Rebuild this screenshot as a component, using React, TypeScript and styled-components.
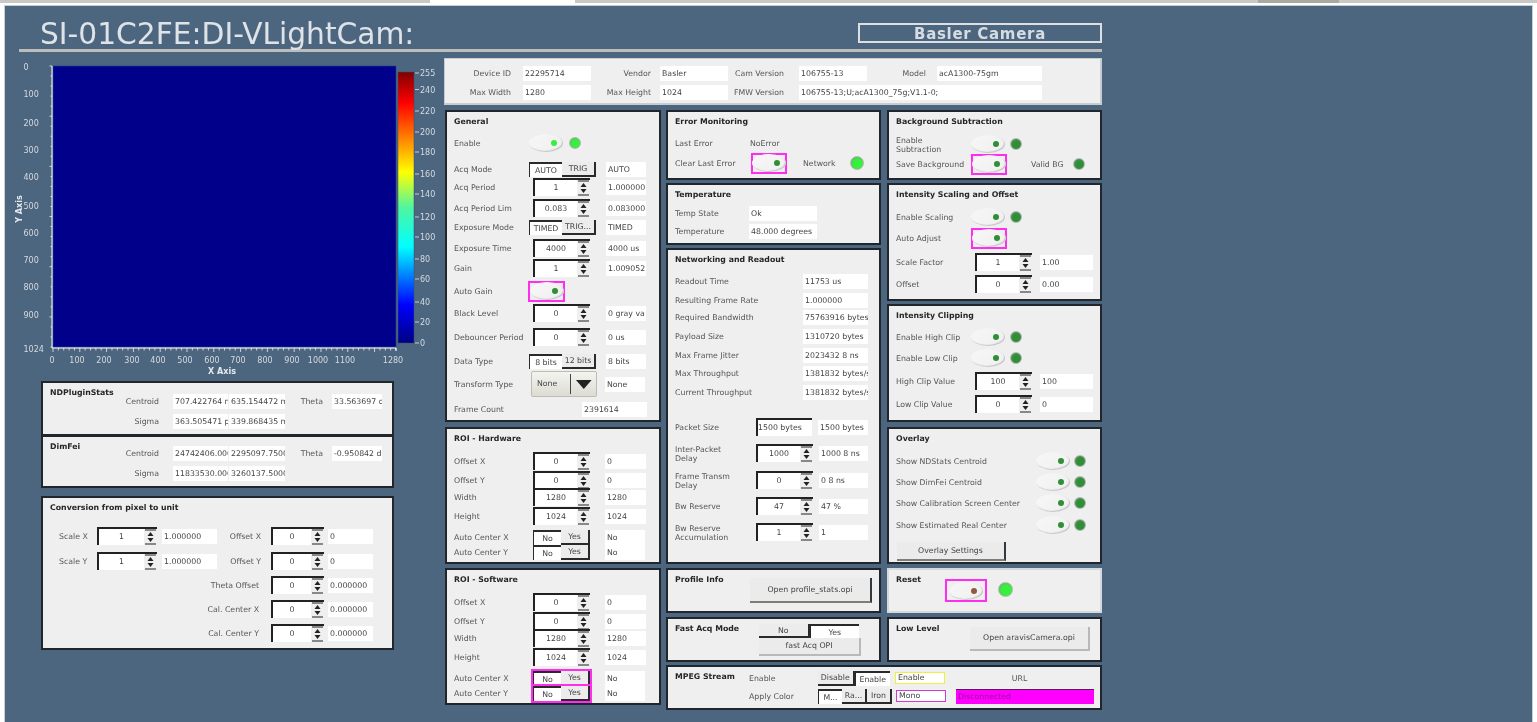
import React from 'react';
import styled, { createGlobalStyle } from 'styled-components';

const GlobalStyle = createGlobalStyle`
  html, body {
    margin: 0;
    padding: 0;
    height: 722px;
    overflow: hidden;
    background: #fff;
    font-family: 'DejaVu Sans', sans-serif;
  }
  * { box-sizing: border-box; }
`;

const Strip = styled.div`
  display: flex;
  height: 5px;
  padding-bottom: 2px;
`;

const StripPart = styled.div<{ $w?: number; $color: string }>`
  flex: ${({ $w }) => ($w ? `0 0 ${$w}px` : '1')};
  background: ${({ $color }) => $color};
`;

const Screen = styled.div`
  height: 717px;
  margin: 0 4px;
  padding-left: 14px;
  background: #4c6680;
  border: 1px solid #c9ced3;
  border-bottom: 0;
  filter: blur(0.5px);
  overflow: hidden;
`;

const Header = styled.div`
  width: 1083px;
  height: 46px;
  display: flex;
  justify-content: space-between;
  align-items: flex-start;
  padding-left: 21px;
  border-bottom: 3px solid #bcbcbc;
`;

const BigTitle = styled.div`
  margin-top: 11px;
  font-size: 29.7px;
  line-height: 34px;
  color: #dfe3e7;
  white-space: nowrap;
`;

const CameraBox = styled.div`
  width: 244px;
  height: 20px;
  margin-top: 17px;
  border: 2px solid #dde0e3;
  color: #d6dce1;
  font-size: 15px;
  font-weight: 700;
  line-height: 19px;
  letter-spacing: 0.7px;
  text-align: center;
`;

const Body = styled.div`
  display: flex;
  margin-top: 4px;
`;

const LeftColumn = styled.div`
  width: 425px;
  flex: none;
`;

const ChartSvg = styled.svg`
  display: block;
  width: 425px;
  height: 325px;
  overflow: visible;
  font-family: 'DejaVu Sans', sans-serif;
  font-size: 8px;
`;

const CardStack = styled.div`
  margin-left: 22px;
  width: 353px;
`;

const RightArea = styled.div`
  width: 658px;
  margin-top: 2px;
`;

const InfoGrid = styled.div`
  height: 47px;
  padding: 7px 0 0 2px;
  display: grid;
  grid-template-columns: 76px 68px 69px 68px 71px 68px 70px 105px;
  grid-auto-rows: 19px;
  background: #efefef;
  border: 1px solid #c6ccd1;
  border-width: 1px 2px 2px 1px;
`;

const InfoLabel = styled.div<{ $pr: number }>`
  font-size: 7.8px;
  line-height: 15px;
  text-align: right;
  color: #555;
  padding-right: ${({ $pr }) => $pr}px;
  white-space: nowrap;
`;

const Columns = styled.div`
  display: flex;
  margin-top: 5px;
`;

const Column = styled.div<{ $ml: number; $w: number }>`
  margin-left: ${({ $ml }) => $ml}px;
  width: ${({ $w }) => $w}px;
  flex: none;
`;

const SubColumns = styled.div`
  display: flex;
`;

const Panel = styled.div<{ $h: number; $mt?: number; $light?: boolean }>`
  height: ${({ $h }) => $h}px;
  margin-top: ${({ $mt }) => $mt ?? 0}px;
  padding: 2px 7px;
  background: #efefef;
  border: 2px solid ${({ $light }) => ($light ? '#d5d9dc' : '#20262c')};
  color: #555;
`;

const Title = styled.div<{ $w?: number }>`
  height: 14px;
  flex: none;
  padding-top: 1px;
  width: ${({ $w }) => ($w ? `${$w}px` : 'auto')};
  font-size: 7.8px;
  font-weight: 700;
  line-height: 14px;
  color: #262626;
  white-space: nowrap;
`;

const Row = styled.div<{ $dy: number }>`
  display: flex;
  align-items: center;
  height: 14px;
  margin-top: ${({ $dy }) => $dy - 14}px;
`;

const Inline = styled.div`
  display: flex;
  align-items: flex-start;
`;

const Stack = styled.div<{ $mt?: number; $ml?: number }>`
  flex: none;
  margin-top: ${({ $mt }) => $mt ?? 0}px;
  margin-left: ${({ $ml }) => $ml ?? 0}px;
`;

const Label = styled.div<{ $w: number; $right?: boolean; $center?: boolean; $ml?: number }>`
  flex: none;
  width: ${({ $w }) => $w}px;
  margin-left: ${({ $ml }) => $ml ?? 0}px;
  padding-top: 2px;
  font-size: 7.8px;
  line-height: 9.5px;
  text-align: ${({ $right, $center }) => ($right ? 'right' : $center ? 'center' : 'left')};
  color: #555;
`;

const Readout = styled.div<{ $w?: number; $h?: number; $ml?: number; $border?: string; $span?: number }>`
  flex: none;
  width: ${({ $w }) => ($w ? `${$w}px` : 'auto')};
  height: ${({ $h }) => $h ?? 15}px;
  margin-left: ${({ $ml }) => $ml ?? 0}px;
  padding: 0 1px 0 2px;
  grid-column: ${({ $span }) => ($span ? `span ${$span}` : 'auto')};
  background: #fff;
  border: ${({ $border }) => ($border ? `1px solid ${$border}` : '0')};
  font-size: 7.8px;
  line-height: ${({ $h, $border }) => ($h ?? 15) - ($border ? 2 : 0)}px;
  color: #444;
  white-space: nowrap;
  overflow: hidden;
`;

const AlarmText = styled.div`
  flex: none;
  width: 138px;
  height: 15px;
  margin-left: 10px;
  padding-left: 2px;
  background: #ff00ff;
  border-top: 1px solid #5a1a5a;
  color: #96109a;
  font-size: 7.8px;
  line-height: 13px;
`;

const SpinBox = styled.div<{ $w: number; $ml?: number; $left?: boolean }>`
  flex: none;
  display: flex;
  width: ${({ $w }) => $w}px;
  height: 18px;
  margin-left: ${({ $ml }) => $ml ?? 0}px;
  background: #fff;
  border-top: 2px solid #222;
  border-left: 2px solid #222;
  font-size: 7.8px;
  line-height: 16px;
  color: #444;
  text-align: ${({ $left }) => ($left ? 'left' : 'center')};
  white-space: nowrap;
  overflow: hidden;
`;

const SpinValue = styled.div`
  flex: 1;
`;

const ArrowSvg = styled.svg`
  flex: none;
  display: block;
  width: 13px;
  height: 16px;
  background: #efefef;
`;

const ChoiceGroup = styled.div<{ $w: number; $h?: number; $ml?: number; $rule?: boolean }>`
  flex: none;
  display: flex;
  width: ${({ $w }) => $w}px;
  height: ${({ $h }) => $h ?? 15}px;
  margin-left: ${({ $ml }) => $ml ?? 0}px;
  outline: ${({ $rule }) => ($rule ? '2px solid #ff2df0' : 'none')};
`;

const ChoiceItem = styled.div<{ $on: boolean }>`
  flex: 1;
  min-width: 0;
  font-size: 7.8px;
  line-height: 13px;
  text-align: center;
  color: #444;
  white-space: nowrap;
  overflow: hidden;
  background: ${({ $on }) => ($on ? '#fff' : '#ececec')};
  border-style: solid;
  border-color: #2a2a2a;
  border-width: ${({ $on }) => ($on ? '2px 0 0 1px' : '0 2px 2px 0')};
`;

const RuleBox = styled.div<{ $w: number; $h: number; $ml?: number; $mt?: number }>`
  flex: none;
  display: flex;
  align-items: center;
  justify-content: center;
  width: ${({ $w }) => $w}px;
  height: ${({ $h }) => $h}px;
  margin-left: ${({ $ml }) => $ml ?? 0}px;
  margin-top: ${({ $mt }) => $mt ?? 0}px;
  border: 2px solid #ff2df0;
`;

const Switch = styled.div<{ $ml?: number }>`
  flex: none;
  display: flex;
  align-items: center;
  justify-content: flex-end;
  width: 34px;
  height: 18px;
  padding-right: 6px;
  margin-left: ${({ $ml }) => $ml ?? 0}px;
  border-radius: 50%;
  background: linear-gradient(135deg, #f7f7f7, #efefef);
  box-shadow: inset -1px -1px 1px #c4c4c4;
`;

const SwitchDot = styled.div<{ $color: string }>`
  width: 6px;
  height: 6px;
  border-radius: 50%;
  background: ${({ $color }) => $color};
`;

const Led = styled.div<{ $size?: number; $color: string; $ml?: number; $mt?: number }>`
  flex: none;
  width: ${({ $size }) => $size ?? 12}px;
  height: ${({ $size }) => $size ?? 12}px;
  margin-left: ${({ $ml }) => $ml ?? 0}px;
  margin-top: ${({ $mt }) => $mt ?? 0}px;
  border-radius: 50%;
  border: 1px solid #b4b8b4;
  background: radial-gradient(circle at 58% 58%, ${({ $color }) => $color} 45%, #84908a 100%);
`;

const ActionButton = styled.div<{ $w: number; $h: number; $ml?: number; $dark?: boolean }>`
  flex: none;
  width: ${({ $w }) => $w}px;
  height: ${({ $h }) => $h}px;
  margin-left: ${({ $ml }) => $ml ?? 0}px;
  background: #ebebeb;
  border-style: solid;
  border-color: ${({ $dark }) => ($dark ? '#33393f' : '#b9b9b9')};
  border-width: 0 2px 2px 0;
  border-bottom-color: ${({ $dark }) => ($dark ? '#7d7d75' : '#b9b9b9')};
  font-size: 7.8px;
  line-height: ${({ $h }) => $h - 2}px;
  text-align: center;
  color: #444;
  white-space: nowrap;
`;

const Combo = styled.div`
  flex: none;
  display: flex;
  align-items: center;
  width: 66px;
  height: 26px;
  margin-left: 2px;
  border: 1px solid #bdbdb2;
  border-radius: 2px;
  background: linear-gradient(#f4f4ef, #dcdcd4);
  font-size: 7.8px;
  color: #444;
`;

const ComboText = styled.div`
  width: 40px;
  height: 20px;
  line-height: 20px;
  padding-left: 5px;
  border-right: 1px solid #444;
`;

const GREEN = '#2e8f35';
const BRIGHT = '#35f03c';

const Arrows = () => (
  <ArrowSvg viewBox="0 0 13 16">
    <path d="M1 1 H12 M1 15 H12" stroke="#222" strokeWidth="1.2" />
    <path d="M6.5 3 L9.5 7 H3.5 Z M6.5 13 L9.5 9 H3.5 Z" fill="#222" />
  </ArrowSvg>
);

const Spin: React.FC<{ value: string; w?: number; ml?: number }> = ({ value, w = 57, ml }) => (
  <SpinBox $w={w} $ml={ml}>
    <SpinValue>{value}</SpinValue>
    <Arrows />
  </SpinBox>
);

const Choice: React.FC<{ items: string[]; on: number; w?: number; h?: number; ml?: number; rule?: boolean }> = ({
  items,
  on,
  w = 67,
  h,
  ml,
  rule
}) => (
  <ChoiceGroup $w={w} $h={h} $ml={ml} $rule={rule}>
    {items.map((item, i) => (
      <ChoiceItem key={item} $on={i === on}>
        {item}
      </ChoiceItem>
    ))}
  </ChoiceGroup>
);

const Toggle: React.FC<{ color?: string; ml?: number }> = ({ color = GREEN, ml }) => (
  <Switch $ml={ml}>
    <SwitchDot $color={color} />
  </Switch>
);

const RuledToggle: React.FC<{ ml?: number; w?: number; h?: number; color?: string; mt?: number }> = ({
  ml,
  w = 36,
  h = 21,
  color,
  mt
}) => (
  <RuleBox $w={w} $h={h} $ml={ml} $mt={mt}>
    <Toggle color={color} />
  </RuleBox>
);

const SpinRow: React.FC<{
  dy: number;
  label: React.ReactNode;
  value: string;
  readout: string;
  lw?: number;
  ml?: number;
  gap?: number;
  rw?: number;
}> = ({ dy, label, value, readout, lw = 75, ml = 4, gap = 16, rw = 40 }) => (
  <Row $dy={dy}>
    <Label $w={lw}>{label}</Label>
    <Spin value={value} ml={ml} />
    <Readout $w={rw} $ml={gap}>
      {readout}
    </Readout>
  </Row>
);

const ChoiceRow: React.FC<{ dy: number; label: string; items: string[]; readout: string; rule?: boolean; w?: number; ml?: number; gap?: number }> = ({
  dy,
  label,
  items,
  readout,
  rule,
  w,
  ml,
  gap = 10
}) => (
  <Row $dy={dy}>
    <Label $w={75}>{label}</Label>
    <Choice items={items} on={0} w={w} ml={ml} rule={rule} />
    <Readout $w={40} $ml={gap}>
      {readout}
    </Readout>
  </Row>
);

const ValueRow: React.FC<{ dy: number; label: string; value: string }> = ({ dy, label, value }) => (
  <Row $dy={dy}>
    <Label $w={128}>{label}</Label>
    <Readout $w={65}>{value}</Readout>
  </Row>
);

const RoiPanel: React.FC<{ title: string; mt: number; rows: number[]; rule?: boolean }> = ({ title, mt, rows, rule }) => (
  <Panel $h={137} $mt={mt}>
    <Title>{title}</Title>
    <SpinRow dy={rows[0]} label="Offset X" value="0" readout="0" gap={15} rw={41} />
    <SpinRow dy={rows[1]} label="Offset Y" value="0" readout="0" gap={15} rw={41} />
    <SpinRow dy={rows[2]} label="Width" value="1280" readout="1280" gap={15} rw={41} />
    <SpinRow dy={rows[3]} label="Height" value="1024" readout="1024" gap={15} rw={41} />
    <ChoiceRow dy={rows[4]} label="Auto Center X" items={['No', 'Yes']} readout="No" w={57} ml={4} gap={15} rule={rule} />
    <ChoiceRow dy={15} label="Auto Center Y" items={['No', 'Yes']} readout="No" w={57} ml={4} gap={15} rule={rule} />
  </Panel>
);

const StatRow: React.FC<{ dy: number; name: string; a: string; b: string; theta?: string }> = ({ dy, name, a, b, theta }) => (
  <Row $dy={dy}>
    <Label $w={109} $right>
      {name}
    </Label>
    <Readout $w={55} $ml={14}>
      {a}
    </Readout>
    <Readout $w={56} $ml={1}>
      {b}
    </Readout>
    {theta && (
      <>
        <Label $w={38} $right>
          Theta
        </Label>
        <Readout $w={50} $ml={9}>
          {theta}
        </Readout>
      </>
    )}
  </Row>
);

const ConvRow: React.FC<{ dy: number; leftLabel?: string; leftValue?: string; label: string; value: string; readout?: string }> = ({
  dy,
  leftLabel,
  leftValue,
  label,
  value,
  readout
}) => (
  <Row $dy={dy}>
    {leftLabel ? (
      <>
        <Label $w={38} $ml={9}>
          {leftLabel}
        </Label>
        <Spin value="1" w={60} />
        <Readout $w={55} $ml={5}>
          {leftValue}
        </Readout>
        <Label $w={44} $right>
          {label}
        </Label>
      </>
    ) : (
      <Label $w={209} $right>
        {label}
      </Label>
    )}
    <Spin value={value} w={53} ml={leftLabel ? 10 : 12} />
    <Readout $w={45} $ml={4}>
      {readout}
    </Readout>
  </Row>
);

const yTicks: [string, number][] = [
  ['0', 67],
  ['100', 94],
  ['200', 123],
  ['300', 150],
  ['400', 177],
  ['500', 206],
  ['600', 233],
  ['700', 260],
  ['800', 287],
  ['900', 315],
  ['1024', 349]
];

const xTicks: [string, number][] = [
  ['0', 52],
  ['100', 77],
  ['200', 104],
  ['300', 132],
  ['400', 158],
  ['500', 185],
  ['600', 212],
  ['700', 238],
  ['800', 265],
  ['900', 292],
  ['1000', 318],
  ['1100', 345],
  ['1280', 393]
];

const barTicks: [string, number][] = [
  ['255', 73],
  ['240', 89.5],
  ['220', 111],
  ['200', 132],
  ['180', 152],
  ['160', 174],
  ['140', 194],
  ['120', 217],
  ['100', 237],
  ['80', 259],
  ['60', 279],
  ['40', 302],
  ['20', 322],
  ['0', 343]
];

const minorY = Array.from({ length: 29 }, (_, i) => 66 + (i * 281) / 28);
const minorX = Array.from({ length: 65 }, (_, i) => 53 + (i * 343) / 64);

const Chart = () => (
  <ChartSvg viewBox="19 56 425 325">
    <defs>
      <linearGradient id="jet" x1="0" y1="0" x2="0" y2="1">
        <stop offset="0" stopColor="#800000" />
        <stop offset="0.114" stopColor="#ff0000" />
        <stop offset="0.37" stopColor="#ffff00" />
        <stop offset="0.5" stopColor="#50f5a0" />
        <stop offset="0.645" stopColor="#00ffff" />
        <stop offset="0.86" stopColor="#0000ff" />
        <stop offset="1" stopColor="#000080" />
      </linearGradient>
    </defs>
    <rect x="53" y="66" width="343" height="281" fill="#00008b" stroke="#2a3f8a" strokeWidth="0.6" />
    <rect x="398" y="72" width="16" height="271" fill="url(#jet)" stroke="#33507a" strokeWidth="0.5" />
    <path d="M52 66 V348 H396 V351" fill="none" stroke="#fff" strokeWidth="1" />
    {minorY.map((y, i) => (
      <path key={y} d={`M${i % 5 === 0 ? 49.5 : 50.5} ${y} H52`} stroke="#fff" strokeWidth="0.7" />
    ))}
    {minorX.map((x, i) => (
      <path key={x} d={`M${x} 348 V${i % 5 === 0 ? 352 : 350.5}`} stroke="#fff" strokeWidth="0.7" />
    ))}
    {yTicks.map(([label, y]) => (
      <text key={label} x="23.5" y={y + 3} fill="#d5dade">
        {label}
      </text>
    ))}
    {xTicks.map(([label, x]) => (
      <text key={label} x={x} y="363" fill="#d5dade" textAnchor="middle">
        {label}
      </text>
    ))}
    {barTicks.map(([label, y]) => (
      <React.Fragment key={label}>
        <path d={`M415 ${y} H419`} stroke="#e6e6e6" strokeWidth="0.8" />
        <text x="420" y={y + 3} fill="#d5dade">
          {label}
        </text>
      </React.Fragment>
    ))}
    <text x="222" y="374" fill="#e6e9ec" fontWeight="700" textAnchor="middle">
      X Axis
    </text>
    <text transform="translate(22 209) rotate(-90)" fill="#e6e9ec" fontWeight="700" textAnchor="middle">
      Y Axis
    </text>
  </ChartSvg>
);

const overlayRows: [string, number][] = [
  ['Show NDStats Centroid', 23],
  ['Show DimFei Centroid', 21],
  ['Show Calibration Screen Center', 21],
  ['Show Estimated Real Center', 22]
];

export default function App() {
  return (
    <>
      <GlobalStyle />
      <Strip>
        <StripPart $w={430} $color="#c8c8c8" />
        <StripPart $w={145} $color="#ffffff" />
        <StripPart $w={683} $color="#c8c8c8" />
        <StripPart $w={81} $color="#a9a9a2" />
        <StripPart $color="#c8c8c8" />
      </Strip>
      <Screen>
        <Header>
          <BigTitle>SI-01C2FE:DI-VLightCam:</BigTitle>
          <CameraBox>Basler Camera</CameraBox>
        </Header>
        <Body>
          <LeftColumn>
            <Chart />
            <CardStack>
              <Panel $h={55}>
                <Title>NDPluginStats</Title>
                <StatRow dy={9} name="Centroid" a="707.422764 m" b="635.154472 m" theta="33.563697 deg" />
                <StatRow dy={20} name="Sigma" a="363.505471 px" b="339.868435 m" />
              </Panel>
              <Panel $h={53} $mt={-1}>
                <Title>DimFei</Title>
                <StatRow dy={7} name="Centroid" a="24742406.000" b="2295097.7500" theta="-0.950842 deg" />
                <StatRow dy={20} name="Sigma" a="11833530.000" b="3260137.5000" />
              </Panel>
              <Panel $h={154} $mt={8}>
                <Title>Conversion from pixel to unit</Title>
                <ConvRow dy={29} leftLabel="Scale X" leftValue="1.000000" label="Offset X" value="0" readout="0" />
                <ConvRow dy={25} leftLabel="Scale Y" leftValue="1.000000" label="Offset Y" value="0" readout="0" />
                <ConvRow dy={24} label="Theta Offset" value="0" readout="0.000000" />
                <ConvRow dy={24} label="Cal. Center X" value="0" readout="0.000000" />
                <ConvRow dy={24} label="Cal. Center Y" value="0" readout="0.000000" />
              </Panel>
            </CardStack>
          </LeftColumn>
          <RightArea>
            <InfoGrid>
              <InfoLabel $pr={12}>Device ID</InfoLabel>
              <Readout>22295714</Readout>
              <InfoLabel $pr={9}>Vendor</InfoLabel>
              <Readout>Basler</Readout>
              <InfoLabel $pr={15}>Cam Version</InfoLabel>
              <Readout>106755-13</Readout>
              <InfoLabel $pr={11}>Model</InfoLabel>
              <Readout>acA1300-75gm</Readout>
              <InfoLabel $pr={12}>Max Width</InfoLabel>
              <Readout>1280</Readout>
              <InfoLabel $pr={9}>Max Height</InfoLabel>
              <Readout>1024</Readout>
              <InfoLabel $pr={15}>FMW Version</InfoLabel>
              <Readout $span={3}>106755-13;U;acA1300_75g;V1.1-0;</Readout>
            </InfoGrid>
            <Columns>
              <Column $ml={1} $w={216}>
                <Panel $h={312}>
                  <Title>General</Title>
                  <Row $dy={22}>
                    <Label $w={75}>Enable</Label>
                    <Toggle color={BRIGHT} />
                    <Led $color={BRIGHT} $ml={6} />
                  </Row>
                  <ChoiceRow dy={26} label="Acq Mode" items={['AUTO', 'TRIG']} readout="AUTO" />
                  <SpinRow dy={18} label="Acq Period" value="1" readout="1.000000" />
                  <SpinRow dy={21} label="Acq Period Lim" value="0.083" readout="0.083000" />
                  <ChoiceRow dy={19} label="Exposure Mode" items={['TIMED', 'TRIG...']} readout="TIMED" />
                  <SpinRow dy={21} label="Exposure Time" value="4000" readout="4000 us" />
                  <SpinRow dy={20} label="Gain" value="1" readout="1.009052" />
                  <Row $dy={23}>
                    <Label $w={74}>Auto Gain</Label>
                    <RuledToggle w={37} />
                  </Row>
                  <SpinRow dy={22} label="Black Level" value="0" readout="0 gray va" />
                  <SpinRow dy={24} label="Debouncer Period" value="0" readout="0 us" />
                  <ChoiceRow dy={24} label="Data Type" items={['8 bits', '12 bits']} readout="8 bits" />
                  <Row $dy={23}>
                    <Label $w={75}>Transform Type</Label>
                    <Combo>
                      <ComboText>None</ComboText>
                      <svg width="25" height="9" viewBox="-5 0 25 9">
                        <path d="M0 0 H16 L8 9 Z" fill="#222" />
                      </svg>
                    </Combo>
                    <Readout $w={40} $ml={8}>
                      None
                    </Readout>
                  </Row>
                  <Row $dy={25}>
                    <Label $w={128}>Frame Count</Label>
                    <Readout $w={65}>2391614</Readout>
                  </Row>
                </Panel>
                <RoiPanel title="ROI - Hardware" mt={5} rows={[23, 19, 17, 19, 21]} />
                <RoiPanel title="ROI - Software" mt={4} rows={[23, 19, 17, 19, 21]} rule />
              </Column>
              <Column $ml={5} $w={436}>
                <SubColumns>
                  <Column $ml={0} $w={215}>
                    <Panel $h={70}>
                      <Title>Error Monitoring</Title>
                      <Row $dy={22}>
                        <Label $w={75}>Last Error</Label>
                        <Label $w={60}>NoError</Label>
                      </Row>
                      <Row $dy={20}>
                        <Label $w={75}>Clear Last Error</Label>
                        <RuledToggle ml={1} />
                        <Label $w={47} $ml={16}>
                          Network
                        </Label>
                        <Led $size={14} $color={BRIGHT} />
                      </Row>
                    </Panel>
                    <Panel $h={62} $mt={3}>
                      <Title>Temperature</Title>
                      <Row $dy={19}>
                        <Label $w={74}>Temp State</Label>
                        <Readout $w={68}>Ok</Readout>
                      </Row>
                      <Row $dy={18}>
                        <Label $w={74}>Temperature</Label>
                        <Readout $w={68}>48.000 degrees</Readout>
                      </Row>
                    </Panel>
                    <Panel $h={316} $mt={3}>
                      <Title>Networking and Readout</Title>
                      <ValueRow dy={22} label="Readout Time" value="11753 us" />
                      <ValueRow dy={19} label="Resulting Frame Rate" value="1.000000" />
                      <ValueRow dy={17} label="Required Bandwidth" value="75763916 bytes" />
                      <ValueRow dy={19} label="Payload Size" value="1310720 bytes" />
                      <ValueRow dy={19} label="Max Frame Jitter" value="2023432 8 ns" />
                      <ValueRow dy={18} label="Max Throughput" value="1381832 bytes/s" />
                      <ValueRow dy={19} label="Current Throughput" value="1381832 bytes/s" />
                      <Row $dy={35}>
                        <Label $w={81}>Packet Size</Label>
                        <SpinBox $w={56} $left>
                          1500 bytes
                        </SpinBox>
                        <Readout $w={50} $ml={6}>
                          1500 bytes
                        </Readout>
                      </Row>
                      <SpinRow
                        dy={26}
                        lw={81}
                        ml={0}
                        gap={6}
                        rw={49}
                        label={
                          <>
                            Inter-Packet
                            <br />
                            Delay
                          </>
                        }
                        value="1000"
                        readout="1000 8 ns"
                      />
                      <SpinRow
                        dy={27}
                        lw={81}
                        ml={0}
                        gap={6}
                        rw={49}
                        label={
                          <>
                            Frame Transm
                            <br />
                            Delay
                          </>
                        }
                        value="0"
                        readout="0 8 ns"
                      />
                      <SpinRow dy={26} lw={81} ml={0} gap={6} rw={49} label="Bw Reserve" value="47" readout="47 %" />
                      <SpinRow
                        dy={26}
                        lw={81}
                        ml={0}
                        gap={6}
                        rw={49}
                        label={
                          <>
                            Bw Reserve
                            <br />
                            Accumulation
                          </>
                        }
                        value="1"
                        readout="1"
                      />
                    </Panel>
                    <Panel $h={45} $mt={4}>
                      <Inline>
                        <Title $w={75}>Profile Info</Title>
                        <Stack $mt={6}>
                          <ActionButton $w={122} $h={25} $dark>
                            Open profile_stats.opi
                          </ActionButton>
                        </Stack>
                      </Inline>
                    </Panel>
                    <Panel $h={45} $mt={4}>
                      <Inline>
                        <Title $w={84}>Fast Acq Mode</Title>
                        <Stack $mt={3}>
                          <Choice items={['No', 'Yes']} on={1} w={100} h={14} />
                          <ActionButton $w={102} $h={18}>
                            fast Acq OPI
                          </ActionButton>
                        </Stack>
                      </Inline>
                    </Panel>
                  </Column>
                  <Column $ml={6} $w={215}>
                    <Panel $h={70}>
                      <Title>Background Subtraction</Title>
                      <Row $dy={23}>
                        <Label $w={75}>
                          Enable
                          <br />
                          Subtraction
                        </Label>
                        <Toggle />
                        <Led $color={GREEN} $ml={5} />
                      </Row>
                      <Row $dy={20}>
                        <Label $w={75}>Save Background</Label>
                        <RuledToggle />
                        <Label $w={42} $ml={24}>
                          Valid BG
                        </Label>
                        <Led $color={GREEN} />
                      </Row>
                    </Panel>
                    <Panel $h={118} $mt={3}>
                      <Title>Intensity Scaling and Offset</Title>
                      <Row $dy={23}>
                        <Label $w={75}>Enable Scaling</Label>
                        <Toggle />
                        <Led $color={GREEN} $ml={5} />
                      </Row>
                      <Row $dy={21}>
                        <Label $w={75}>Auto Adjust</Label>
                        <RuledToggle />
                      </Row>
                      <SpinRow dy={24} lw={79} ml={0} gap={8} rw={53} label="Scale Factor" value="1" readout="1.00" />
                      <SpinRow dy={22} lw={79} ml={0} gap={8} rw={53} label="Offset" value="0" readout="0.00" />
                    </Panel>
                    <Panel $h={118} $mt={3}>
                      <Title>Intensity Clipping</Title>
                      <Row $dy={22}>
                        <Label $w={75}>Enable High Clip</Label>
                        <Toggle />
                        <Led $color={GREEN} $ml={5} />
                      </Row>
                      <Row $dy={21}>
                        <Label $w={75}>Enable Low Clip</Label>
                        <Toggle />
                        <Led $color={GREEN} $ml={5} />
                      </Row>
                      <SpinRow dy={23} lw={79} ml={0} gap={8} rw={53} label="High Clip Value" value="100" readout="100" />
                      <SpinRow dy={23} lw={79} ml={0} gap={8} rw={53} label="Low Clip Value" value="0" readout="0" />
                    </Panel>
                    <Panel $h={137} $mt={5}>
                      <Title>Overlay</Title>
                      {overlayRows.map(([label, dy]) => (
                        <Row key={label} $dy={dy}>
                          <Label $w={140}>{label}</Label>
                          <Toggle />
                          <Led $color={GREEN} $ml={4} />
                        </Row>
                      ))}
                      <Row $dy={26}>
                        <ActionButton $w={109} $h={19} $ml={1} $dark>
                          Overlay Settings
                        </ActionButton>
                      </Row>
                    </Panel>
                    <Panel $h={45} $mt={4} $light>
                      <Inline>
                        <Title $w={49}>Reset</Title>
                        <RuledToggle w={42} h={23} color="#8f5a40" mt={7} />
                        <Led $size={15} $color={BRIGHT} $ml={11} $mt={10} />
                      </Inline>
                    </Panel>
                    <Panel $h={45} $mt={4}>
                      <Inline>
                        <Title $w={74}>Low Level</Title>
                        <Stack $mt={6}>
                          <ActionButton $w={120} $h={24}>
                            Open aravisCamera.opi
                          </ActionButton>
                        </Stack>
                      </Inline>
                    </Panel>
                  </Column>
                </SubColumns>
                <Panel $h={45} $mt={3}>
                  <Inline>
                    <Title $w={74}>MPEG Stream</Title>
                    <Stack $mt={2}>
                      <Row $dy={14}>
                        <Label $w={69}>Enable</Label>
                        <Choice items={['Disable', 'Enable']} on={1} w={72} />
                        <Readout $w={50} $h={12} $ml={5} $border="#f2ee3c">
                          Enable
                        </Readout>
                        <Label $w={149} $center>
                          URL
                        </Label>
                      </Row>
                      <Row $dy={18}>
                        <Label $w={69}>Apply Color</Label>
                        <Choice items={['M...', 'Ra...', 'Iron']} on={0} w={74} />
                        <Readout $w={50} $h={12} $ml={4} $border="#d03cd0">
                          Mono
                        </Readout>
                        <AlarmText>Disconnected</AlarmText>
                      </Row>
                    </Stack>
                  </Inline>
                </Panel>
              </Column>
            </Columns>
          </RightArea>
        </Body>
      </Screen>
    </>
  );
}
